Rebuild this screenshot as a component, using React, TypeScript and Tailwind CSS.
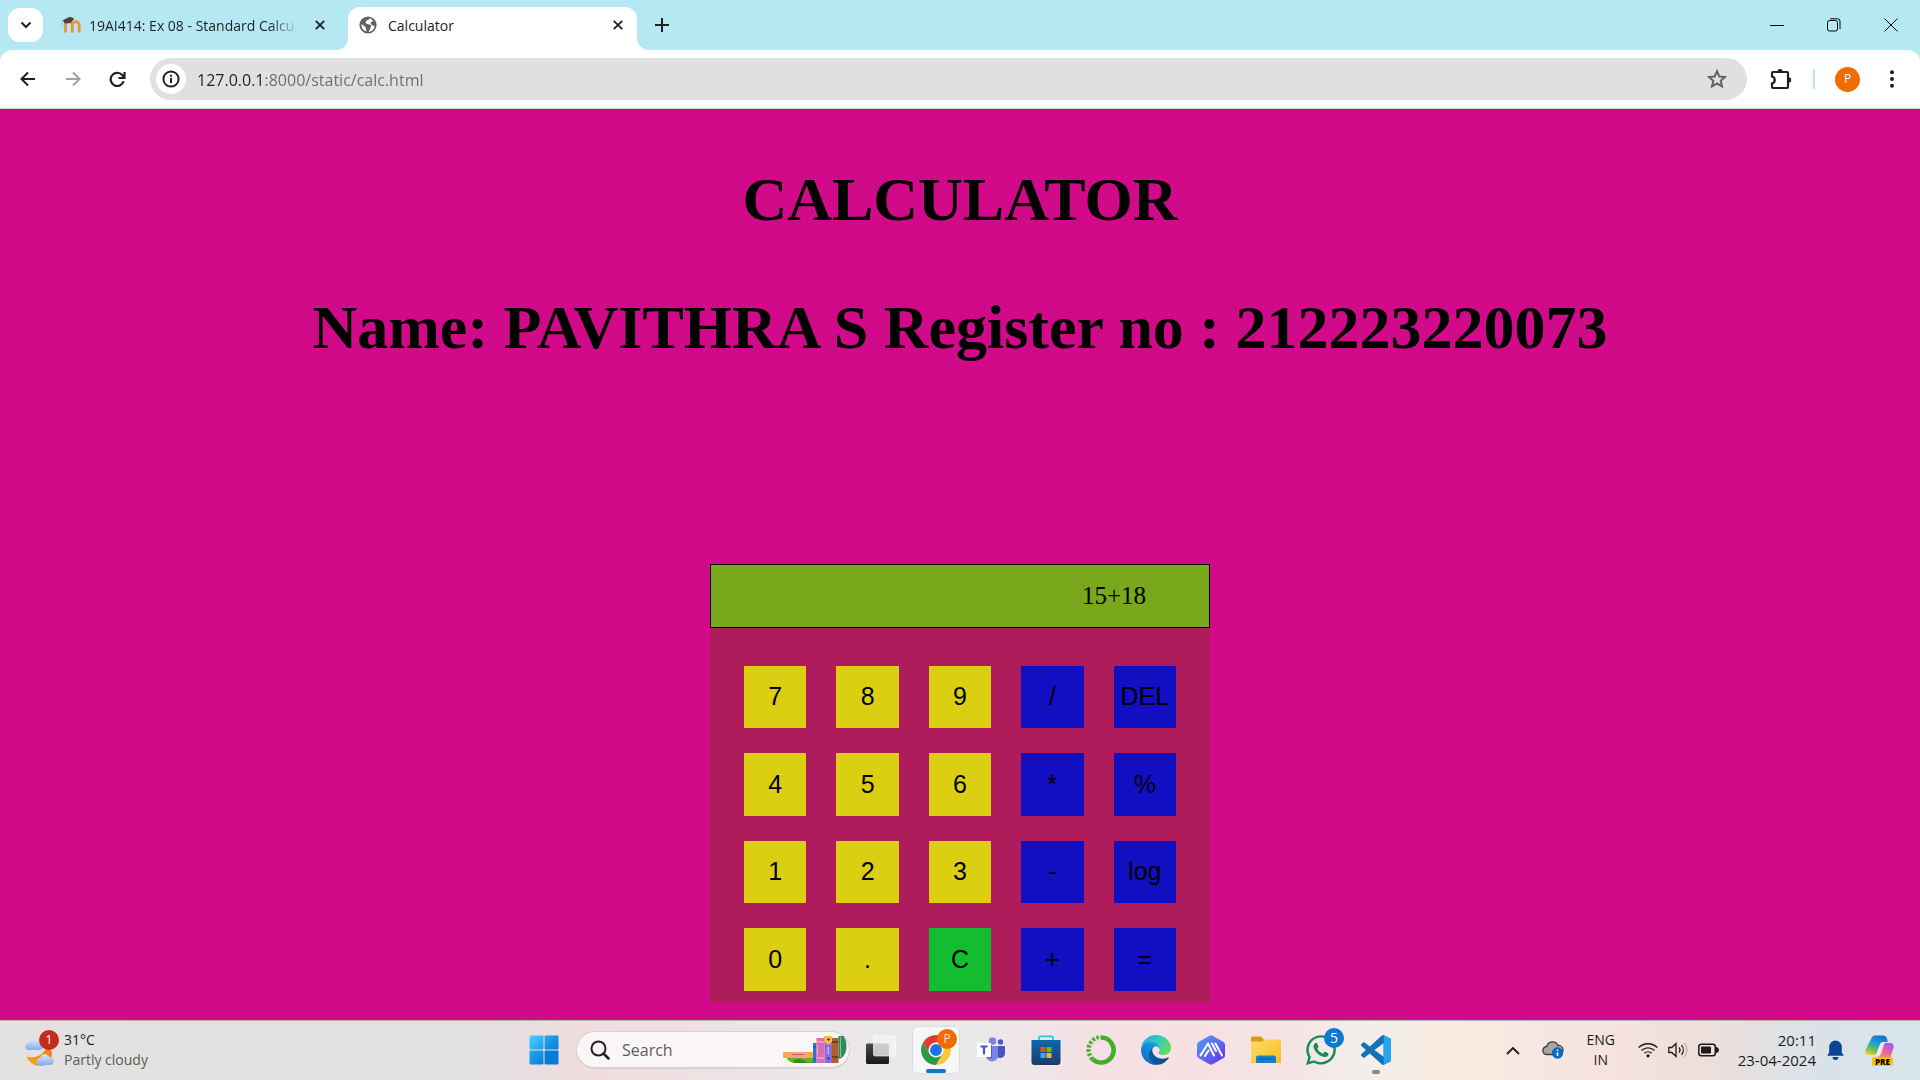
import { useState, type ReactNode } from "react";
import { FaWhatsapp } from "react-icons/fa6";

const ui = "font-['Open_Sans','Noto_Sans',sans-serif]";

function CloseIcon() {
  return (
    <svg width="10" height="10" viewBox="0 0 10 10" stroke="#1c2123" strokeWidth="1.8" aria-hidden="true">
      <path d="M.8.8l8.4 8.4M9.2.8L.8 9.2" />
    </svg>
  );
}

function MoodleIcon() {
  return (
    <svg width="20" height="18" viewBox="0 0 20 18" aria-hidden="true" className="shrink-0">
      <path d="M4.5 16.5V9.2a3.4 3.4 0 0 1 6.8 0v7.3M11.300 9.200a3.400 3.400 0 0 1 6.900 0v7.300" fill="none" stroke="#f0923c" strokeWidth="2.8" />
      <path d="M1.500 4.200L9 .8l4.200 1.700-3.300 4.200-6 .8z" fill="#4a4340" />
      <path d="M2 4.500L1 11" stroke="#c9b7a6" />
    </svg>
  );
}

function GlobeIcon() {
  return (
    <svg width="18" height="18" viewBox="0 0 18 18" aria-hidden="true">
      <circle cx="9" cy="9" r="8.600" fill="#5f6368" />
      <path d="M11.500 2.200L7.200 5.100c-1 .7-.8 2.200.3 2.600l3.600 1.100c1.200.4 1.300 1.600.6 2.400l-2.100 4.800c2.800-.2 5.500-2.600 6-5.800l-2.900-1.200-1.400-2.400 2.700-1.100c-.6-1.400-1.300-2.500-2.500-3.300zM2.400 8l3.800 2.700.8 1.700.4 3C4.500 14.800 2.300 12 2.400 8z" fill="#fff" />
    </svg>
  );
}

function TabStrip() {
  return (
    <header className="flex h-[50px] bg-[#b5e8f2]">
      <button aria-label="Search tabs" className="ml-2 mt-2 grid h-[34px] w-[35px] place-items-center rounded-xl bg-white">
        <svg width="12" height="8" viewBox="0 0 12 8" fill="none" stroke="#1c2123" strokeWidth="2"><path d="M1.500 1.500L6 6l4.500-4.500" /></svg>
      </button>
      <div className="ml-[18px] flex w-[287px] items-center">
        <MoodleIcon />
        <span className="ml-2 w-[210px] whitespace-nowrap pt-px text-sm text-[#1c2123] [mask-image:linear-gradient(90deg,#000_86%,transparent)]">19AI414: Ex 08 - Standard Calcu</span>
        <button aria-label="Close tab" className="ml-4"><CloseIcon /></button>
      </div>
      <div className="relative mt-[7px] flex w-[289px] items-center rounded-t-xl bg-white pb-[7px] pl-[11px] pr-[14px]">
        <svg className="absolute -left-3 bottom-0" width="12" height="12" viewBox="0 0 12 12" fill="#fff" aria-hidden="true"><path d="M12 0v12H0A12 12 0 0 0 12 0z" /></svg>
        <svg className="absolute -right-3 bottom-0" width="12" height="12" viewBox="0 0 12 12" fill="#fff" aria-hidden="true"><path d="M0 0v12h12A12 12 0 0 1 0 0z" /></svg>
        <GlobeIcon />
        <span className="ml-[11px] flex-1 pt-px text-sm text-[#1c2123]">Calculator</span>
        <button aria-label="Close tab"><CloseIcon /></button>
      </div>
      <button aria-label="New tab" className="ml-[18px]">
        <svg width="14" height="14" viewBox="0 0 14 14" stroke="#1c2123" strokeWidth="2"><path d="M7 0v14M0 7h14" /></svg>
      </button>
      <div className="ml-auto flex items-center gap-[43px] pr-[22px]">
        <button aria-label="Minimise"><svg width="14" height="14" viewBox="0 0 14 14" stroke="#000"><path d="M0 7.500h14" /></svg></button>
        <button aria-label="Restore"><svg width="14" height="14" viewBox="0 0 14 14" fill="none" stroke="#000"><rect x=".5" y="2.500" width="10" height="10.500" rx="2" /><path d="M3 .8h7.500a2.500 2.500 0 0 1 2.500 2.500V11" /></svg></button>
        <button aria-label="Close window"><svg width="14" height="14" viewBox="0 0 14 14" stroke="#000"><path d="M.5.5l13 13M13.500.5l-13 13" /></svg></button>
      </div>
    </header>
  );
}

function Toolbar() {
  const [url, setUrl] = useState("127.0.0.1:8000/static/calc.html");
  return (
    <div className="bg-[#b5e8f2]">
      <div className="flex h-[59px] items-center rounded-t-xl border-b border-[#c9d8c8] bg-white">
        <button aria-label="Back" className="ml-5">
          <svg width="16" height="16" viewBox="0 0 16 16" fill="none" stroke="#1c2123" strokeWidth="2"><path d="M15 8H2M8 1.500L1.500 8 8 14.500" /></svg>
        </button>
        <button aria-label="Forward" className="ml-[29px]">
          <svg width="16" height="16" viewBox="0 0 16 16" fill="none" stroke="#a0a2a3" strokeWidth="2"><path d="M1 8h13M8 1.500L14.500 8 8 14.500" /></svg>
        </button>
        <button aria-label="Reload" className="ml-[28px]">
          <svg width="17" height="17" viewBox="0 0 17 17" fill="none" stroke="#1c2123" strokeWidth="2.200"><path d="M14.600 10.200A6.600 6.600 0 1 1 13.200 4l1.800 2M15.500 1v6h-6" /></svg>
        </button>
        <div className="ml-6 flex h-[42px] flex-1 items-center rounded-full bg-[#e0e0e0] pl-[6px] pr-5">
          <button aria-label="View site information" className="grid size-[30px] place-items-center rounded-full bg-white">
            <svg width="18" height="18" viewBox="0 0 18 18" fill="none" stroke="#1c2123" strokeWidth="2"><circle cx="9" cy="9" r="7.600" /><path d="M9 8v5M9 4.800v2" /></svg>
          </button>
          <div className="ml-[11px] flex-1 pt-px text-base">
            <input
              aria-label="Address"
              value={url}
              onChange={(e) => setUrl(e.target.value)}
              className="w-full bg-[linear-gradient(90deg,#1f2023_69px,#6a6c6f_69px)] bg-clip-text text-transparent caret-black outline-none"
            />
          </div>
          <button aria-label="Bookmark this page">
            <svg width="20" height="20" viewBox="0 0 20 20" fill="none" stroke="#5f6368" strokeWidth="2"><path d="M10 2.200l2.300 5.300 5.700.5-4.300 3.800 1.300 5.700-5-3-5 3 1.300-5.700L2 8l5.700-.5z" /></svg>
          </button>
        </div>
        <button aria-label="Extensions" className="ml-[23px]">
          <svg width="22" height="22" viewBox="0 0 22 22" aria-hidden="true">
            <path d="M3 4h14a1 1 0 0 1 1 1v14a1 1 0 0 1-1 1H3a1 1 0 0 1-1-1v-3.500a3.600 3.600 0 0 0 0-7V5a1 1 0 0 1 1-1z" fill="none" stroke="#1c2123" strokeWidth="2.200" />
            <path d="M7.500 3.500a2.600 2.600 0 0 1 5.200 0zM18.500 9.200a2.700 2.700 0 0 1 0 5.400z" fill="#1c2123" />
          </svg>
        </button>
        <span className="ml-[21px] h-5 w-[2px] bg-[#b5e8f2]" />
        <button aria-label="Profile" className="ml-5 grid size-[25px] place-items-center rounded-full bg-[#ee6c02] text-xs text-white">P</button>
        <button aria-label="Menu" className="ml-[29px] mr-[25px]">
          <svg width="6" height="18" viewBox="0 0 6 18" fill="#1c2123"><circle cx="3" cy="2.200" r="2" /><circle cx="3" cy="9" r="2" /><circle cx="3" cy="15.800" r="2" /></svg>
        </button>
      </div>
    </div>
  );
}

const keys = ["7", "8", "9", "/", "DEL", "4", "5", "6", "*", "%", "1", "2", "3", "-", "log", "0", ".", "C", "+", "="];

function keyColour(key: string) {
  if (key === "C") return "bg-[#14bd30]";
  return /^[0-9.]$/.test(key) ? "bg-[#dccf12]" : "bg-[#110fc1]";
}

function Calculator() {
  const [value, setValue] = useState("15+18");
  const press = (key: string) => {
    if (key === "C") setValue("");
    else if (key === "DEL") setValue(value.slice(0, -1));
    else if (key !== "=" && key !== "log") setValue(value + key);
  };
  return (
    <section className="w-[500px] bg-[#ae1c5c]">
      <input
        aria-label="Result"
        readOnly
        value={value}
        className="block h-16 w-full border border-black bg-[#7aa81c] pr-[63px] text-right font-['Liberation_Serif',serif] text-[25px] text-black outline-none"
      />
      <div className="grid grid-cols-5 gap-x-[30px] gap-y-[25px] px-[34px] pb-3 pt-[38px]">
        {keys.map((key) => (
          <button
            key={key}
            onClick={() => press(key)}
            className={`grid aspect-square place-items-center font-['Liberation_Sans',sans-serif] text-[25px] text-black ${keyColour(key)}`}
          >
            {key}
          </button>
        ))}
      </div>
    </section>
  );
}

function WeatherIcon() {
  return (
    <svg width="34" height="36" viewBox="0 0 34 36" aria-hidden="true">
      <defs>
        <linearGradient id="cloud" x1="0" y1="0" x2="0" y2="1"><stop stopColor="#d9e6fb" /><stop offset="1" stopColor="#8aacec" /></linearGradient>
        <linearGradient id="moon" x1="0" y1="1" x2="1" y2="0"><stop stopColor="#f6a91f" /><stop offset="1" stopColor="#ee7a1a" /></linearGradient>
      </defs>
      <path d="M2.500 24.500c9 2.500 18-1.500 20.500-11 5 3 6 9 4 14-4 9-20 9-24.500-3z" fill="url(#moon)" />
      <path d="M4 18a3.600 3.600 0 0 1 .6-7.100 5.400 5.400 0 0 1 10-.8A4 4 0 0 1 16 18z" fill="url(#cloud)" />
      <path d="M16 33a3.500 3.500 0 0 1 0-7 5.200 5.200 0 0 1 9.600-.8 4 4 0 0 1 1.400 7.800z" fill="url(#cloud)" />
    </svg>
  );
}

function StartIcon() {
  return (
    <svg width="30" height="30" viewBox="0 0 30 30" aria-hidden="true">
      <defs>
        <linearGradient id="win" x1="0" y1="0" x2="1" y2="1"><stop stopColor="#4fd2fb" /><stop offset="1" stopColor="#169fe6" /></linearGradient>
        <linearGradient id="win2" x1="0" y1="0" x2="1" y2="1"><stop stopColor="#25abee" /><stop offset="1" stopColor="#0a7bd6" /></linearGradient>
      </defs>
      <rect x=".5" y=".5" width="14" height="14" rx="1" fill="url(#win)" />
      <rect x="15.500" y=".5" width="14" height="14" rx="1" fill="url(#win2)" />
      <rect x=".5" y="15.500" width="14" height="14" rx="1" fill="url(#win2)" />
      <rect x="15.500" y="15.500" width="14" height="14" rx="1" fill="#057ad6" />
    </svg>
  );
}

function BooksIcon() {
  return (
    <svg width="64" height="30" viewBox="0 0 64 30" aria-hidden="true">
      <path d="M3 22h27v6H11q-6-1-8-6z" fill="#6fae24" />
      <path d="M10 26q6-4 12 0t8 0v2H11z" fill="#3c8d17" />
      <rect y="17" width="30" height="6" rx="1" fill="#eeb03c" />
      <rect x="5" y="17" width="20" height="5.500" rx="2.500" fill="#f2a091" />
      <path d="M9 19.500h12" stroke="#d9584c" />
      <rect x="30" y="8" width="3.500" height="20" fill="#2a75d8" />
      <path d="M30 12h3.500M30 24h3.500" stroke="#164ea4" />
      <rect x="33.500" y="3" width="8" height="25" fill="#db6fae" />
      <path d="M33.500 7h8M33.500 23h8" stroke="#f3a3c8" strokeWidth="1.500" />
      <path d="M34.500 10v10" stroke="#f3a3c8" />
      <rect x="41.500" y="1" width="7.500" height="27" fill="#8c6be0" />
      <path d="M41.500 1H49v6l-3.700 3-3.800-3z" fill="#f3bd3f" />
      <path d="M45.300 12v7" stroke="#c9b5fb" strokeWidth="1.500" />
      <path d="M44 4.500h3M45.500 3v3M44 23.500h3M45.500 22v3" stroke="#4a2fa0" />
      <rect x="49" y="3" width="6.500" height="25" fill="#b65e2a" />
      <path d="M49 7h6.500M49 22h6.500" stroke="#6d3312" strokeWidth="1.500" />
      <path d="M55.500 1h5q3 4 3 11t-5 11l-3 1z" fill="#2f8b57" />
      <path d="M57.500 2v20" stroke="#7cc696" />
    </svg>
  );
}

function TaskViewIcon() {
  return (
    <svg width="30" height="30" viewBox="0 0 30 30" aria-hidden="true">
      <defs><linearGradient id="tv" x1="0" y1="0" x2="0" y2="1"><stop stopColor="#4b4b4b" /><stop offset="1" stopColor="#191919" /></linearGradient></defs>
      <rect x="0" y="8.500" width="23" height="20.500" rx="1.500" fill="url(#tv)" />
      <rect x="7.500" y="1" width="22" height="20" rx="1.500" fill="#f4f4f4" fillOpacity=".78" stroke="#fff" strokeOpacity=".6" />
    </svg>
  );
}

function ChromeIcon() {
  return (
    <svg width="30" height="30" viewBox="0 0 48 48" aria-hidden="true">
      <path d="M24 12h20.780A24 24 0 0 0 3.220 12l10.390 18z" fill="#e33b2e" />
      <path d="M34.390 30L24 48a24 24 0 0 0 20.780-36H24z" fill="#fcc934" />
      <path d="M13.610 30L3.220 12A24 24 0 0 0 24 48l10.390-18z" fill="#2a9a48" />
      <circle cx="24" cy="24" r="12" fill="#fff" />
      <circle cx="24" cy="24" r="9.500" fill="#1a73e8" />
    </svg>
  );
}

function TeamsIcon() {
  return (
    <svg width="28" height="26" viewBox="0 0 28 26" aria-hidden="true">
      <circle cx="23.500" cy="5" r="2.700" fill="#5059c9" />
      <path d="M19 9h8a1 1 0 0 1 1 1v6a5 5 0 0 1-9 3z" fill="#4b53bc" />
      <circle cx="15.500" cy="4" r="3.800" fill="#7b83eb" />
      <path d="M9 9h12v9.500a6 6 0 0 1-12 0z" fill="#7b83eb" />
      <path d="M11 8h4v13h-5z" fill="#3b4299" opacity=".6" />
      <rect y="6" width="14" height="14" fill="#fff" />
      <path d="M3.500 9.500h7M7 9.500v8" stroke="#4b53bc" strokeWidth="2.200" />
    </svg>
  );
}

function StoreIcon() {
  return (
    <svg width="30" height="30" viewBox="0 0 30 30" aria-hidden="true">
      <defs><linearGradient id="store" x1="0" y1="0" x2="0" y2="1"><stop stopColor="#0d68b0" /><stop offset="1" stopColor="#1c3b6c" /></linearGradient></defs>
      <path d="M8 6V2.500A1.200 1.200 0 0 1 9.200 1.300h11.600A1.200 1.200 0 0 1 22 2.500V6" fill="none" stroke="#2fc2ef" strokeWidth="1.800" />
      <path d="M.5 5h29v22a3 3 0 0 1-3 3h-23a3 3 0 0 1-3-3z" fill="url(#store)" />
      <path d="M9.500 12h5v5h-5z" fill="#f25022" /><path d="M15.500 12h5v5h-5z" fill="#7fba00" />
      <path d="M9.500 18h5v5h-5z" fill="#28b4f0" /><path d="M15.500 18h5v5h-5z" fill="#ffb900" />
    </svg>
  );
}

function AnacondaIcon() {
  return (
    <svg width="30" height="30" viewBox="0 0 30 30" fill="none" stroke="#43b02a" aria-hidden="true">
      <path d="M15 2.500a12.500 12.500 0 1 1-8.500 21.600" strokeWidth="4.600" />
      <path d="M6.500 24A12.500 12.500 0 0 1 15 2.500" strokeWidth="4.600" strokeDasharray="2.500 1.600" />
      <path d="M6.500 22A11.500 11.500 0 0 1 14 4.200" stroke="#f1e1e4" strokeWidth="1.200" strokeDasharray="2 2" />
    </svg>
  );
}

function EdgeIcon() {
  return (
    <svg width="30" height="30" viewBox="0 0 256 256" aria-hidden="true">
      <defs>
        <linearGradient id="e1" x1="0" y1="0" x2="1" y2="0"><stop stopColor="#0c59a4" /><stop offset="1" stopColor="#114a8b" /></linearGradient>
        <linearGradient id="e2" x1=".7" y1="0" x2=".3" y2="1"><stop stopColor="#1b9de2" /><stop offset="1" stopColor="#0a6cc9" /></linearGradient>
        <linearGradient id="e3" x1="0" y1=".2" x2="1" y2=".6"><stop stopColor="#22a8e6" /><stop offset=".5" stopColor="#31c9c3" /><stop offset="1" stopColor="#63dd58" /></linearGradient>
      </defs>
      <path fill="url(#e1)" d="M231.070 190.540c-3.410 1.780-6.930 3.340-10.540 4.670a101.980 101.980 0 0 1-35.910 6.460c-47.320 0-88.540-32.550-88.540-74.320a31.480 31.480 0 0 1 16.430-27.310c-42.800 1.800-53.800 46.400-53.800 72.530 0 73.880 68.090 81.370 82.760 81.370 7.910 0 19.840-2.300 27-4.560l1.310-.44a128.340 128.340 0 0 0 66.600-52.800 4 4 0 0 0-5.310-5.600z" />
      <path fill="url(#e2)" d="M105.730 241.420a79.200 79.200 0 0 1-22.740-21.340 80.720 80.720 0 0 1 29.530-120c3.120-1.470 8.450-4.130 15.540-4a32.350 32.350 0 0 1 25.690 13 31.880 31.880 0 0 1 6.360 18.660c0-.21 24.460-79.600-80-79.600-43.900 0-80 41.660-80 78.210a130.150 130.150 0 0 0 12.110 56 128 128 0 0 0 156.380 67.110 75.550 75.550 0 0 1-62.780-8z" />
      <path fill="url(#e3)" d="M152.330 148.860c-.81 1.050-3.300 2.500-3.300 5.660 0 2.610 1.700 5.120 4.720 7.230 14.380 10 41.490 8.680 41.560 8.680a59.560 59.560 0 0 0 30.270-8.350A61.380 61.380 0 0 0 256 109.170c.26-22.410-8-37.310-11.340-43.910C223.460 23.840 177.720 0 128 0A128 128 0 0 0 0 126.200c.48-36.540 36.800-66.050 80-66.050 3.500 0 23.460.34 42 10.070 16.340 8.580 24.900 18.940 30.850 29.210 6.180 10.670 7.280 24.150 7.280 29.520s-2.740 13.330-7.800 19.910z" />
    </svg>
  );
}

function HexIcon() {
  return (
    <svg width="28" height="30" viewBox="0 0 28 30" aria-hidden="true">
      <defs><linearGradient id="hex" x1="0" y1="0" x2="1" y2="1"><stop stopColor="#4fa0f0" /><stop offset=".5" stopColor="#5b6cf0" /><stop offset="1" stopColor="#6a28e8" /></linearGradient></defs>
      <path d="M12.500.7q1.500-.8 3 0L26.500 7Q28 8 28 9.500v11q0 1.500-1.500 2.500l-11 6.300q-1.500.8-3 0L1.500 23Q0 22 0 20.500v-11Q0 8 1.500 7z" fill="url(#hex)" />
      <path d="M3.500 20.500L11 8.500l6 12M8 21l3.500-5.500M15 8.500l4 7.500M18.500 8.500L25 20.500" fill="none" stroke="#fff" strokeWidth="2" strokeLinecap="round" strokeLinejoin="round" />
    </svg>
  );
}

function FolderIcon() {
  return (
    <svg width="30" height="28" viewBox="0 0 30 28" aria-hidden="true">
      <defs><linearGradient id="fold" x1="0" y1="0" x2="1" y2="1"><stop stopColor="#ffdc6b" /><stop offset="1" stopColor="#f9bb1e" /></linearGradient></defs>
      <path d="M0 2a1.500 1.500 0 0 1 1.500-1.500H10L13 4v5H0z" fill="#d99a10" />
      <path d="M0 5.500h11L13.500 3.500H29a1 1 0 0 1 1 1V27H0z" fill="url(#fold)" />
      <path d="M5 27v-5a2.500 2.500 0 0 1 2.500-2.500h15A2.500 2.500 0 0 1 25 22v5z" fill="#1580d0" />
      <path d="M8.500 23h13" stroke="#0b559c" />
    </svg>
  );
}

function CodeIcon() {
  return (
    <svg width="30" height="30" viewBox="0 0 24 24" aria-hidden="true">
      <defs><clipPath id="band"><path d="M17.800-1H25v26h-7.200z" /></clipPath></defs>
      <path fill="#1274b8" d="M23.150 2.587L18.210.21a1.494 1.494 0 0 0-1.705.29l-9.460 8.630-4.120-3.128a.999.999 0 0 0-1.276.057L.327 7.261A1 1 0 0 0 .326 8.740L3.899 12 .326 15.260a1 1 0 0 0 .001 1.479L1.650 17.940a.999.999 0 0 0 1.276.057l4.120-3.128 9.460 8.630a1.492 1.492 0 0 0 1.704.29l4.942-2.377A1.500 1.500 0 0 0 24 20.060V3.939a1.500 1.500 0 0 0-.85-1.352zm-5.146 14.861L10.826 12l7.178-5.448v10.896z" />
      <path clipPath="url(#band)" fill="#2aa3ee" d="M23.150 2.587L18.210.21v23.580l4.942-2.377A1.500 1.500 0 0 0 24 20.060V3.939a1.500 1.500 0 0 0-.85-1.352z" />
    </svg>
  );
}

function CopilotIcon() {
  return (
    <svg width="30" height="30" viewBox="0 0 30 30" aria-hidden="true">
      <defs>
        <linearGradient id="c1" x1=".6" y1="0" x2=".2" y2="1"><stop stopColor="#1a6fd6" /><stop offset=".45" stopColor="#23a8c4" /><stop offset=".75" stopColor="#7cc04b" /><stop offset="1" stopColor="#f0cf30" /></linearGradient>
        <linearGradient id="c2" x1=".7" y1="0" x2=".3" y2="1"><stop stopColor="#a45be8" /><stop offset=".55" stopColor="#e660a8" /><stop offset="1" stopColor="#f9865a" /></linearGradient>
      </defs>
      <path d="M7 2q1-1.500 3-1.500h8.500q2.500 0 3.300 2.500l1 4h-4.500q-2 0-3 2.500L12 17.500q-.8 2.500-3 2.500H4q-4.500 0-3.500-5z" fill="url(#c1)" />
      <path d="M17 8h8q4.500 0 3.500 5l-3 9H12q2 0 2.500-2.500z" fill="url(#c2)" />
      <path d="M15 9q.8-2 3-2h2L16 19q-.8 2-3 2h-2z" fill="#f7eef2" opacity=".85" />
    </svg>
  );
}

function TaskButton({ label, children }: { label: string; children: ReactNode }) {
  return <button aria-label={label} className="relative grid size-12 place-items-center">{children}</button>;
}

function Taskbar() {
  return (
    <footer className="grid h-[60px] grid-cols-[1fr_auto_1fr] items-center border-t border-[#b9b5b2] bg-[linear-gradient(90deg,#e3e2e0_0%,#e3e1e0_25%,#f0dcdf_31%,#ebe7e7_42%,#eae8e9_51%,#f6e0e3_58%,#f5e3e5_67%,#f2efea_71%,#f9ebe2_75%,#f6e3de_84%,#efdfd8_88%,#dbe2e8_94%,#d7e4ec_100%)]">
      <button className="relative flex items-center pb-0.5 pl-6 text-left text-sm text-[#1b1b1b]">
        <WeatherIcon />
        <span className="absolute left-[39px] top-0 grid size-5 place-items-center rounded-full bg-[#c42b1c] text-xs text-white">1</span>
        <span className="ml-[6px] leading-5"><span className="block">31°C</span><span className="block text-[#5c5b5a]">Partly cloudy</span></span>
      </button>
      <nav aria-label="Taskbar" className="flex items-center gap-[7px] pb-px">
        <TaskButton label="Start"><StartIcon /></TaskButton>
        <label className="ml-px flex h-[38px] w-[274px] items-center rounded-full border border-b-2 border-[#dacfd1] bg-[#faf6f7] pl-[13px] pr-[2px]">
          <svg width="20" height="20" viewBox="0 0 20 20" fill="none" stroke="#222" strokeWidth="2" aria-hidden="true"><circle cx="8.500" cy="8.500" r="7" /><path d="M13.500 13.500l5 5" strokeWidth="2.500" strokeLinecap="round" /></svg>
          <input aria-label="Search" placeholder="Search" className="ml-3 w-0 flex-1 bg-transparent text-base outline-none placeholder:text-[#5f5c5d]" />
          <BooksIcon />
        </label>
        <TaskButton label="Task view"><TaskViewIcon /></TaskButton>
        <button aria-label="Chrome" className="relative grid size-12 place-items-center rounded-md border border-[#dddbdc] bg-[#f8f7f7]">
          <ChromeIcon />
          <span className="absolute right-[2px] top-[2px] grid size-5 place-items-center rounded-full bg-[#ee6c02] text-xs text-[#ffe3cb]">P</span>
          <span className="absolute bottom-0 left-[13px] h-1 w-5 rounded-full bg-[#0b78d4]" />
        </button>
        <TaskButton label="Teams"><TeamsIcon /></TaskButton>
        <TaskButton label="Store"><StoreIcon /></TaskButton>
        <TaskButton label="Anaconda"><AnacondaIcon /></TaskButton>
        <TaskButton label="Edge"><EdgeIcon /></TaskButton>
        <TaskButton label="AI assistant"><HexIcon /></TaskButton>
        <TaskButton label="File Explorer"><FolderIcon /></TaskButton>
        <TaskButton label="WhatsApp">
          <FaWhatsapp className="size-[34px] text-[#1c8a55]" />
          <span className="absolute right-px top-[2px] grid size-5 place-items-center rounded-full bg-[#0b78d4] text-sm text-white">5</span>
        </TaskButton>
        <TaskButton label="Code">
          <CodeIcon />
          <span className="absolute bottom-0 left-5 h-1 w-2 rounded-full bg-[#8c8784]" />
        </TaskButton>
      </nav>
      <div className="flex items-center justify-end pb-px pr-[25px] text-sm text-[#1b1b1b]">
        <button aria-label="Show hidden icons"><svg width="14" height="9" viewBox="0 0 14 9" fill="none" stroke="#1b1b1b" strokeWidth="1.800"><path d="M1 8l6-6 6 6" /></svg></button>
        <button aria-label="OneDrive" className="ml-[22px]">
          <svg width="22" height="18" viewBox="0 0 22 18" aria-hidden="true"><path d="M5 13.500a4 4 0 0 1-.3-8A6 6 0 0 1 16 4.500a4.500 4.500 0 0 1 1 9z" fill="#a9a7a6" stroke="#3d3b3a" strokeWidth="1.300" /><circle cx="15.500" cy="12" r="5.700" fill="#0b68c1" /><path d="M15.500 11.200v3.800M15.500 8.500v1.500" stroke="#fff" strokeWidth="1.600" /></svg>
        </button>
        <button className="ml-[21px] w-8 text-center leading-5">ENG<br />IN</button>
        <button aria-label="Network, volume and battery" className="ml-[21px] flex items-center gap-[10px]">
          <svg width="20" height="16" viewBox="0 0 20 16" fill="none" stroke="#1b1b1b" strokeWidth="1.400"><path d="M.7 5.600a13.200 13.200 0 0 1 18.600 0M3.600 8.500a9 9 0 0 1 12.800 0M6.400 11.300a5.200 5.200 0 0 1 7.200 0" /><circle cx="10" cy="13.800" r="1.600" fill="#1b1b1b" stroke="none" /></svg>
          <svg width="20" height="16" viewBox="0 0 20 16" fill="none" stroke="#1b1b1b" strokeWidth="1.300"><path d="M.8 5.500h3L8 1.500v13l-4.200-4h-3zM11 5.500a4 4 0 0 1 0 5M13.500 3.200a7.500 7.500 0 0 1 0 9.600" /><path d="M16.200 1a10.500 10.500 0 0 1 0 14" stroke="#bbb3ad" /></svg>
          <svg width="21" height="14" viewBox="0 0 21 14" aria-hidden="true"><rect x=".8" y="1.300" width="16.500" height="11.400" rx="2.500" fill="none" stroke="#1b1b1b" strokeWidth="1.500" /><rect x="3" y="3.500" width="10" height="7" rx="1" fill="#1b1b1b" /><path d="M18 4.500a2.500 2.500 0 0 1 0 5z" fill="#1b1b1b" stroke="#1b1b1b" /></svg>
        </button>
        <button className="ml-[19px] text-right text-[15px] leading-5">20:11<br />23-04-2024</button>
        <button aria-label="Notifications" className="ml-[11px]">
          <svg width="17" height="20" viewBox="0 0 17 20" fill="#0a4595" aria-hidden="true"><path d="M8.500.5A6.300 6.300 0 0 1 14.800 7v5.500l2 3.300H.2l2-3.300V7A6.300 6.300 0 0 1 8.500.5zM5.500 17h6a3 3 0 0 1-6 0z" /></svg>
        </button>
        <button aria-label="Copilot preview" className="relative ml-[21px]">
          <CopilotIcon />
          <span className="absolute -bottom-px left-[7px] rounded-xs bg-[#fcc400] px-[3px] text-[8px] font-extrabold leading-[9px] text-black">PRE</span>
        </button>
      </div>
    </footer>
  );
}

export default function App() {
  return (
    <div className={`flex min-h-screen flex-col ${ui}`}>
      <TabStrip />
      <Toolbar />
      <main className="flex flex-1 flex-col items-center bg-[#d00a88] pb-4 font-['Liberation_Serif',serif] text-black">
        <h1 className="mt-[54px] text-[62px] font-bold leading-[72px]">CALCULATOR</h1>
        <h1 className="mb-[201px] mt-14 text-[62px] font-bold leading-[72px]">Name: PAVITHRA S Register no : 212223220073</h1>
        <Calculator />
      </main>
      <Taskbar />
    </div>
  );
}
